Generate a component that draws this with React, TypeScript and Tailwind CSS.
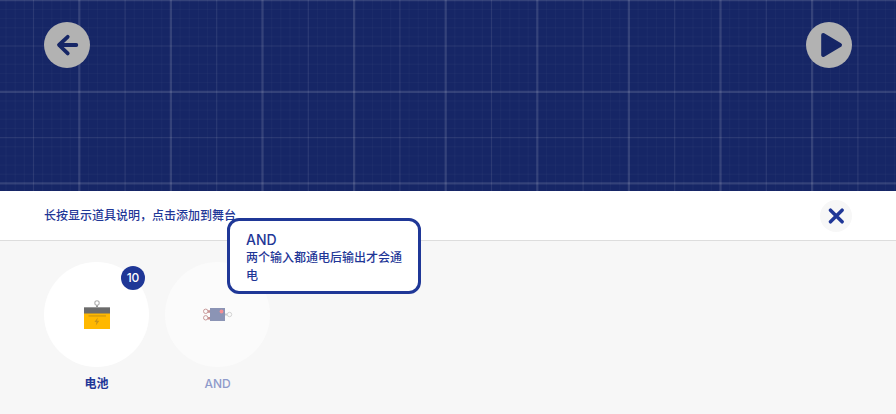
import React from "react";

const CELL = 91.6;

function gridLines(offset: number, limit: number) {
  const lines: { at: number; kind: "major" | "half" | "minor" }[] = [];
  for (let i = -10; offset + (i * CELL) / 10 < limit; i++) {
    const at = offset + (i * CELL) / 10;
    const kind = i % 10 === 0 ? "major" : i % 5 === 0 ? "half" : "minor";
    lines.push({ at, kind });
  }
  return lines;
}

const STROKE = {
  major: { width: 2.3, opacity: 0.13 },
  half: { width: 1.2, opacity: 0.09 },
  minor: { width: 1.4, opacity: 0.025 },
};

function Blueprint() {
  return (
    <svg className="absolute inset-0 h-full w-full" aria-hidden="true">
      <g stroke="#ffffff">
        {gridLines(79.3, 2400).map((l) => (
          <line key={"v" + l.at} x1={l.at} x2={l.at} y1="0" y2="100%" strokeWidth={STROKE[l.kind].width} strokeOpacity={STROKE[l.kind].opacity} />
        ))}
        {gridLines(0.2, 1600).map((l) => (
          <line key={"h" + l.at} y1={l.at} y2={l.at} x1="0" x2="100%" strokeWidth={STROKE[l.kind].width} strokeOpacity={STROKE[l.kind].opacity} />
        ))}
      </g>
    </svg>
  );
}

function BatteryIcon() {
  return (
    <svg width="26" height="30" viewBox="0 0 26 30" aria-hidden="true">
      <path d="M13 5v4" stroke="#999999" strokeWidth="2" />
      <circle cx="13" cy="3" r="2.2" fill="#fff" stroke="#b0b0b0" strokeWidth="1.1" />
      <rect y="7" width="26" height="7" fill="#6b6b6b" />
      <rect y="7" width="26" height="1" fill="#999999" />
      <rect y="13.5" width="26" height="15.5" fill="#ffb800" />
      <rect x="4.5" y="15" width="17.5" height="1.8" fill="#dfa208" />
      <path d="M13.8 17.6l-3.4 4.4h2l-.6 3.6 3.6-4.8h-2.3z" fill="#c99416" />
    </svg>
  );
}

function AndGateIcon() {
  return (
    <svg width="30" height="14" viewBox="0 0 30 14" aria-hidden="true">
      <path d="M4.5 3.5h3M4.5 10.2h3" stroke="#c78f8f" strokeWidth="2.4" />
      <circle cx="2.7" cy="3.3" r="2.2" fill="#fbfbfb" stroke="#c99a9a" />
      <circle cx="2.7" cy="9.8" r="2.2" fill="#fbfbfb" stroke="#c99a9a" />
      <path d="M22 6.5h3" stroke="#cccccc" strokeWidth="2" />
      <circle cx="26.5" cy="6.5" r="2.2" fill="#fbfbfb" stroke="#d3d3d3" />
      <rect x="7" y="0" width="15" height="13" fill="#8b94b5" />
      <circle cx="18.5" cy="3.5" r="1.9" fill="#f58f93" />
    </svg>
  );
}

export default function App() {
  return (
    <main className="flex min-h-screen flex-col bg-[#f7f7f7] font-['Inter','Noto_Sans_CJK_SC',sans-serif] font-medium text-[#1f3797]">
      <section className="relative flex h-[191px] items-start justify-between overflow-hidden bg-[#162666] px-11 pt-[22px]">
        <Blueprint />
        <button type="button" aria-label="返回" className="relative flex size-[46px] items-center justify-center rounded-full bg-[#b2b2b2] text-[#162666]">
          <svg width="46" height="46" viewBox="0 0 46 46" fill="none" stroke="currentColor" strokeWidth="3.8" strokeLinecap="round" strokeLinejoin="round" aria-hidden="true">
            <path d="M23.7 14.8L15 23l8.7 8.4" />
            <path d="M16 23h16.3" />
          </svg>
        </button>
        <button type="button" aria-label="运行" className="relative flex size-[46px] items-center justify-center rounded-full bg-[#b2b2b2] text-[#162666]">
          <svg width="46" height="46" viewBox="0 0 46 46" fill="currentColor" stroke="currentColor" strokeWidth="4" strokeLinejoin="round" aria-hidden="true">
            <path d="M17.2 13L34 23L17.2 33z" />
          </svg>
        </button>
      </section>

      <header className="flex h-[50px] items-center justify-between border-b border-[#dddddd] bg-white px-11">
        <p className="text-xs">长按显示道具说明，点击添加到舞台</p>
        <button type="button" aria-label="关闭" className="flex size-8 items-center justify-center rounded-full bg-[#f7f7f7]">
          <svg width="16" height="16" viewBox="0 0 16 16" stroke="currentColor" strokeWidth="3.5" strokeLinecap="round" aria-hidden="true">
            <path d="M2.5 2.2l11.6 11.6M14.1 2.2l-11.6 11.6" />
          </svg>
        </button>
      </header>

      <ul className="flex gap-4 px-11 pt-[21px]">
        <li>
          <button type="button" className="relative flex flex-col items-center gap-[9px] text-xs">
            <span className="flex size-[105px] items-center justify-center rounded-full bg-white">
              <BatteryIcon />
            </span>
            <span className="font-bold">电池</span>
            <span className="absolute top-1 right-1 flex size-6 items-center justify-center rounded-full bg-[#1f3797] text-xs text-white">10</span>
          </button>
        </li>
        <li className="relative">
          <button type="button" aria-describedby="and-tip" className="flex flex-col items-center gap-[9px] text-xs">
            <span className="flex size-[105px] items-center justify-center rounded-full bg-[#fbfbfb]">
              <AndGateIcon />
            </span>
            <span className="text-[#8f9bcb]">AND</span>
          </button>
          <div id="and-tip" role="tooltip" className="absolute bottom-[98px] left-[62px] w-[194px] rounded-xl border-3 border-[#1f3797] bg-white px-4 pt-2.5 pb-1.5 text-xs leading-[18px]">
            <p className="text-sm leading-[18px]">AND</p>
            <p>两个输入都通电后输出才会通电</p>
          </div>
        </li>
      </ul>
    </main>
  );
}
